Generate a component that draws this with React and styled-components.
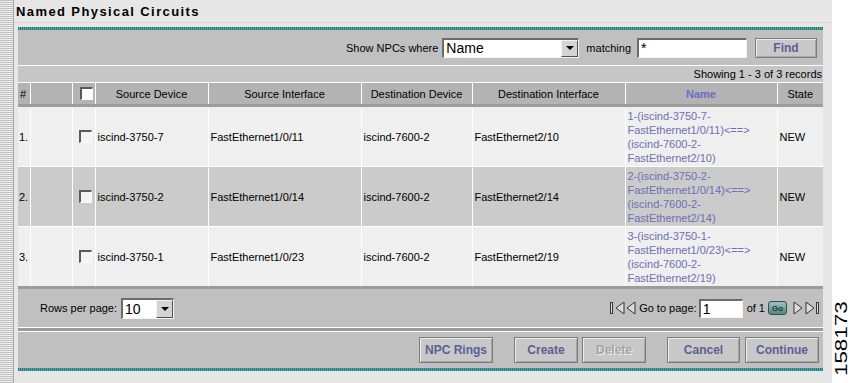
import React from 'react';
import styled, { createGlobalStyle } from 'styled-components';

const GlobalStyle = createGlobalStyle`
  html, body {
    margin: 0;
    padding: 0;
    background: #fff;
  }
  body {
    font-family: "Liberation Sans", Arial, sans-serif;
    font-size: 11px;
    color: #000;
  }
`;

const Page = styled.div`
  display: flex;
  width: 850px;
  height: 383px;
  overflow: hidden;
`;

const Stripe = styled.div`
  flex: none;
  width: 13px;
  border-right: 1px solid #a9a9a9;
  background: repeating-linear-gradient(180deg, #c2c2c2 0 1px, #ededed 1px 2px);
`;

const Main = styled.div`
  flex: none;
  width: 818px;
  background: #e6e6e6;
  display: flex;
  flex-direction: column;
`;

const Title = styled.div`
  height: 22px;
  border-bottom: 1px solid #e2d3d3;
  padding-left: 2px;
  font: bold 13px "Liberation Sans", Arial, sans-serif;
  letter-spacing: 1.4px;
  line-height: 24px;
`;

const Panel = styled.div`
  margin: 4px 9px 0 4px;
  background: #c0c0c0;
  display: flex;
  flex-direction: column;
`;

const TealRule = styled.div`
  height: 3px;
  background: repeating-linear-gradient(90deg, #1e7b7b 0 1px, #5aa5a5 1px 2px);
`;

const FilterBar = styled.div`
  height: 35px;
  display: flex;
  align-items: center;
  justify-content: flex-end;
  padding-right: 6px;
  border-bottom: 1px solid #fff;
`;

const Label = styled.span`
  margin: ${p => p.$m || '0'};
  font-size: ${p => p.$size || 11}px;
  white-space: nowrap;
`;

const Sunken = styled.div`
  box-sizing: border-box;
  width: ${p => p.$w}px;
  height: ${p => p.$h || 20}px;
  background: #fff;
  border-style: solid;
  border-width: 2px 1px 1px 2px;
  border-color: #6b6b6b #f4f4f4 #f4f4f4 #6b6b6b;
  display: flex;
  align-items: center;
  justify-content: space-between;
  padding-left: 2px;
  font-size: 14px;
  line-height: 1;
`;

const DropButton = styled.span`
  box-sizing: border-box;
  width: 17px;
  height: 100%;
  background: #d4d4d4;
  border-style: solid;
  border-width: 1px;
  border-color: #f4f4f4 #505050 #505050 #f4f4f4;
  display: flex;
  align-items: center;
  justify-content: center;

  &::after {
    content: '';
    border-left: 4px solid transparent;
    border-right: 4px solid transparent;
    border-top: 4px solid #000;
  }
`;

const Button = styled.button`
  box-sizing: border-box;
  width: ${p => p.$w}px;
  height: ${p => p.$h || 26}px;
  margin-left: ${p => p.$gap || 0}px;
  padding: 0;
  background: #c8c8c8;
  border: 1px solid #7c7c7c;
  box-shadow: inset 1px 1px #ececec, inset -1px -1px #a6a6a6;
  font: bold 12px "Liberation Sans", Arial, sans-serif;
  color: ${p => (p.disabled ? '#a2a2a2' : '#5e5e94')};
  text-shadow: ${p => (p.disabled ? '1px 1px #f2f2f2' : 'none')};
`;

const RecordsBar = styled.div`
  height: 16px;
  line-height: 16px;
  background: #c6c6c6;
  text-align: right;
  padding-right: 1px;
  font-size: 11px;
`;

const Grid = styled.table`
  width: 100%;
  border-collapse: collapse;
  table-layout: fixed;
  border-bottom: 3px solid #9c9c9c;
`;

const Th = styled.th`
  height: 21px;
  padding: 0 2px;
  background: #b3b3b3;
  border-top: 1px solid #fff;
  border-left: 1px solid #fff;
  border-bottom: 3px solid #9c9c9c;
  text-align: ${p => p.$align || 'center'};
  font-size: 11px;
  font-weight: ${p => (p.$link ? 'bold' : 'normal')};
  color: ${p => (p.$link ? '#6c6cc6' : '#000')};

  &:first-child {
    border-left: none;
  }
`;

const Tr = styled.tr`
  background: ${p => (p.$shade ? '#cbcbcb' : '#efefef')};
`;

const Td = styled.td`
  height: 59px;
  padding: 0 2px;
  border-top: 1px solid #fff;
  border-left: 1px solid #fff;
  vertical-align: middle;
  font-size: 11px;
  white-space: nowrap;
  overflow: hidden;
  color: ${p => (p.$link ? '#6e6eb2' : '#000')};
  line-height: 14px;

  &:first-child {
    border-left: none;
    padding-left: 1px;
  }
`;

const Check = styled.span`
  display: block;
  box-sizing: border-box;
  width: 13px;
  height: 13px;
  margin-left: ${p => p.$m || 4}px;
  background: ${p => (p.$head ? '#fff' : '#f4f4f4')};
  border-style: solid;
  border-width: 2px 1px 1px 2px;
  border-color: #5a5a5a #fafafa #fafafa #5a5a5a;
`;

const PagerBar = styled.div`
  height: 38px;
  display: flex;
  align-items: center;
  justify-content: space-between;
  padding: 0 4px 0 22px;
  border-bottom: 1px solid #fff;
`;

const Group = styled.div`
  display: flex;
  align-items: center;
`;

const GoButton = styled.span`
  box-sizing: border-box;
  width: 19px;
  height: 14px;
  margin: 0 5px 0 3px;
  border: 1px solid #2e5252;
  border-radius: 3px;
  background: linear-gradient(#9cc0c0, #578585);
  color: #163636;
  font: bold 8px "Liberation Sans", Arial, sans-serif;
  display: flex;
  align-items: center;
  justify-content: center;
`;

const Divider = styled.div`
  height: 3px;
  background: #9c9c9c;
  border-bottom: 1px solid #fff;
`;

const ButtonBar = styled.div`
  height: 36px;
  display: flex;
  align-items: center;
  justify-content: flex-end;
  padding-right: 4px;
`;

const Side = styled.div`
  flex: 1;
  display: flex;
  align-items: flex-end;
  justify-content: flex-end;
  padding-bottom: 18px;
`;

const FigNumber = styled.span`
  writing-mode: vertical-rl;
  transform: rotate(180deg) scaleY(1.4);
  font: 16px "Liberation Sans", Arial, sans-serif;
  line-height: 16px;
  color: #000;
`;

const PageIcon = ({ dir, bar }) => {
  const tri = dir === 'left' ? '10,2 2,8 10,14' : '2,2 10,8 2,14';
  return (
    <svg width={bar ? 15 : 12} height="16" viewBox={bar ? '0 0 15 16' : '0 0 12 16'}>
      {bar && dir === 'left' && <rect x="0.5" y="2.5" width="2" height="11" fill="#e2e2e2" stroke="#333" />}
      <g transform={bar && dir === 'left' ? 'translate(4 0)' : undefined}>
        <polygon points={tri} fill="#dcdcdc" stroke="#333" strokeWidth="1" strokeLinejoin="round" />
      </g>
      {bar && dir === 'right' && <rect x="12.5" y="2.5" width="2" height="11" fill="#e2e2e2" stroke="#333" />}
    </svg>
  );
};

const rows = [
  {
    n: '1.',
    src: 'iscind-3750-7',
    srcIf: 'FastEthernet1/0/11',
    dst: 'iscind-7600-2',
    dstIf: 'FastEthernet2/10',
    name: ['1-(iscind-3750-7-', 'FastEthernet1/0/11)<==>', '(iscind-7600-2-', 'FastEthernet2/10)'],
  },
  {
    n: '2.',
    src: 'iscind-3750-2',
    srcIf: 'FastEthernet1/0/14',
    dst: 'iscind-7600-2',
    dstIf: 'FastEthernet2/14',
    name: ['2-(iscind-3750-2-', 'FastEthernet1/0/14)<==>', '(iscind-7600-2-', 'FastEthernet2/14)'],
  },
  {
    n: '3.',
    src: 'iscind-3750-1',
    srcIf: 'FastEthernet1/0/23',
    dst: 'iscind-7600-2',
    dstIf: 'FastEthernet2/19',
    name: ['3-(iscind-3750-1-', 'FastEthernet1/0/23)<==>', '(iscind-7600-2-', 'FastEthernet2/19)'],
  },
];

const widths = [12, 42, 23, 113, 153, 111, 153, 152, 46];

export default function App() {
  return (
    <>
      <GlobalStyle />
      <Page>
        <Stripe />
        <Main>
          <Title>Named Physical Circuits</Title>
          <Panel>
            <TealRule />
            <FilterBar>
              <Label $m="0 4px 0 0">Show NPCs where</Label>
              <Sunken $w={137}>
                <span>Name</span>
                <DropButton />
              </Sunken>
              <Label $m="0 6px 0 7px">matching</Label>
              <Sunken $w={110}>
                <span>*</span>
              </Sunken>
              <Button $w={62} $h={20} $gap={8}>Find</Button>
            </FilterBar>
            <RecordsBar>Showing 1 - 3 of 3 records</RecordsBar>
            <Grid>
              <colgroup>
                {widths.map((w, i) => (
                  <col key={i} style={{ width: w }} />
                ))}
              </colgroup>
              <thead>
                <tr>
                  <Th $align="left">#</Th>
                  <Th />
                  <Th>
                    <Check $head $m={5} />
                  </Th>
                  <Th>Source Device</Th>
                  <Th>Source Interface</Th>
                  <Th>Destination Device</Th>
                  <Th>Destination Interface</Th>
                  <Th $link>Name</Th>
                  <Th>State</Th>
                </tr>
              </thead>
              <tbody>
                {rows.map((r, i) => (
                  <Tr key={r.n} $shade={i === 1}>
                    <Td>{r.n}</Td>
                    <Td />
                    <Td>
                      <Check />
                    </Td>
                    <Td>{r.src}</Td>
                    <Td>{r.srcIf}</Td>
                    <Td>{r.dst}</Td>
                    <Td>{r.dstIf}</Td>
                    <Td $link>
                      {r.name.map((l, j) => (
                        <div key={j}>{l}</div>
                      ))}
                    </Td>
                    <Td>NEW</Td>
                  </Tr>
                ))}
              </tbody>
            </Grid>
            <PagerBar>
              <Group>
                <Label $m="0 4px 0 0">Rows per page:</Label>
                <Sunken $w={53} $h={21}>
                  <span>10</span>
                  <DropButton />
                </Sunken>
              </Group>
              <Group>
                <PageIcon dir="left" bar />
                <PageIcon dir="left" />
                <Label $m="0 2px 0 2px">Go to page:</Label>
                <Sunken $w={44} $h={19}>
                  <span>1</span>
                </Sunken>
                <Label $m="0 0 0 4px">of 1</Label>
                <GoButton>Go</GoButton>
                <PageIcon dir="right" />
                <PageIcon dir="right" bar />
              </Group>
            </PagerBar>
            <Divider />
            <ButtonBar>
              <Button $w={74}>NPC Rings</Button>
              <Button $w={64} $gap={21}>Create</Button>
              <Button $w={64} $gap={4} disabled>Delete</Button>
              <Button $w={73} $gap={21}>Cancel</Button>
              <Button $w={74} $gap={5}>Continue</Button>
            </ButtonBar>
            <TealRule />
          </Panel>
        </Main>
        <Side>
          <FigNumber>158173</FigNumber>
        </Side>
      </Page>
    </>
  );
}
